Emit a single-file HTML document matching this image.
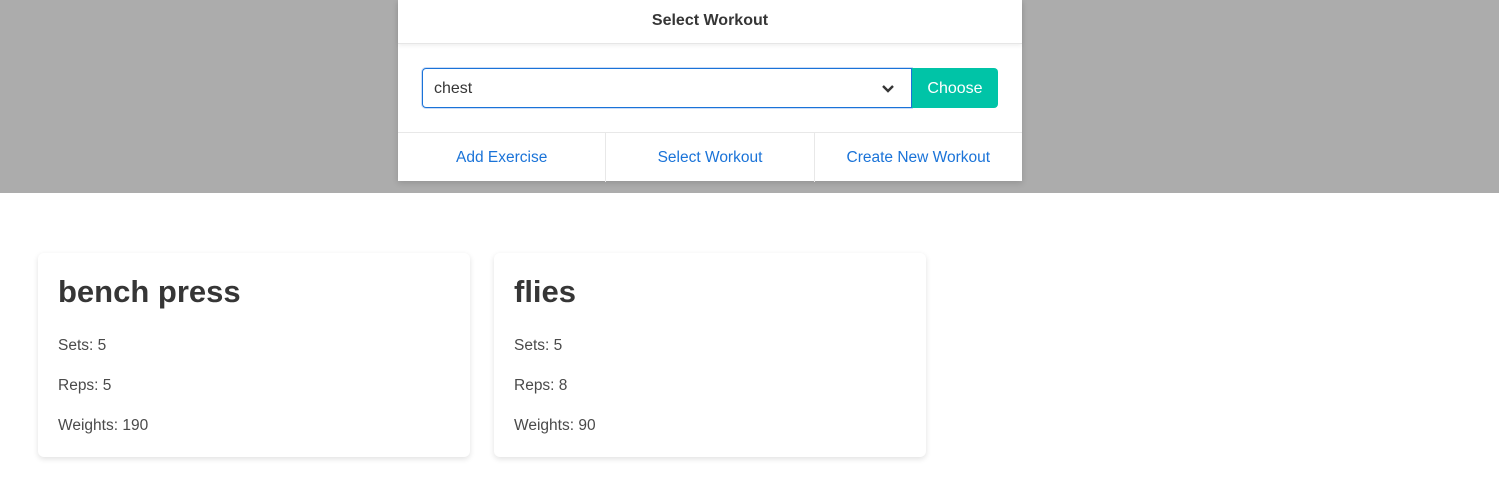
<!DOCTYPE html>
<html><head><style>
body{margin:0;width:1499px;height:492px;background:#fff;font-family:"Liberation Sans",sans-serif;position:relative;overflow:hidden}
.band{position:absolute;left:0;top:0;width:1499px;height:193px;background:#acacac}
.modal{position:absolute;left:398px;top:0;width:624px;height:181px;background:#fff;box-shadow:0 2px 6px rgba(0,0,0,.15)}
.hd{height:43px;border-bottom:1px solid #e6e6e6;box-shadow:0 2px 4px rgba(0,0,0,.06);text-align:center;line-height:42px;font-weight:bold;font-size:16px;color:#363636}
.sel{position:absolute;left:24px;top:68px;width:488px;height:38px;border:1px solid #1a73d8;border-radius:4px 0 0 4px;box-shadow:0 0 0 1px rgba(50,115,220,.25)}
.sel span{position:absolute;left:11px;top:11px;font-size:16px;color:#363636}
.sel svg{position:absolute;right:16px;top:15px}
.btn{position:absolute;left:514px;top:68px;width:86px;height:40px;background:#00c4a7;color:#fff;border-radius:0 4px 4px 0;text-align:center;line-height:41px;font-size:16px}
.ft{position:absolute;left:0;top:132px;width:624px;height:49px;border-top:1px solid #e8e8e8;display:flex}
.ft div{flex:1;text-align:center;line-height:50px;color:#1a73d8;font-size:15.5px;border-right:1px solid #e8e8e8}
.ft div:last-child{border-right:none}
.card{position:absolute;top:253px;width:432px;height:204px;background:#fff;border-radius:6px;box-shadow:0 2px 6px rgba(10,10,10,.12)}
.card h2{position:absolute;left:20px;top:21px;margin:0;font-size:31px;color:#363636;font-weight:bold}
.card p{position:absolute;left:20px;margin:0;font-size:15.5px;color:#4a4a4a}
</style></head><body>
<div class="band"></div>
<div class="modal">
<div class="hd">Select Workout</div>
<div class="sel"><span>chest</span><svg width="14" height="10" viewBox="0 0 14 10"><path d="M2 2l5 5 5-5" fill="none" stroke="#363636" stroke-width="2.4"/></svg></div>
<div class="btn">Choose</div>
<div class="ft"><div>Add Exercise</div><div>Select Workout</div><div>Create New Workout</div></div>
</div>
<div class="card" style="left:38px"><h2>bench press</h2><p style="top:84px">Sets: 5</p><p style="top:124px">Reps: 5</p><p style="top:164px">Weights: 190</p></div>
<div class="card" style="left:494px"><h2>flies</h2><p style="top:84px">Sets: 5</p><p style="top:124px">Reps: 8</p><p style="top:164px">Weights: 90</p></div>
</body></html>
